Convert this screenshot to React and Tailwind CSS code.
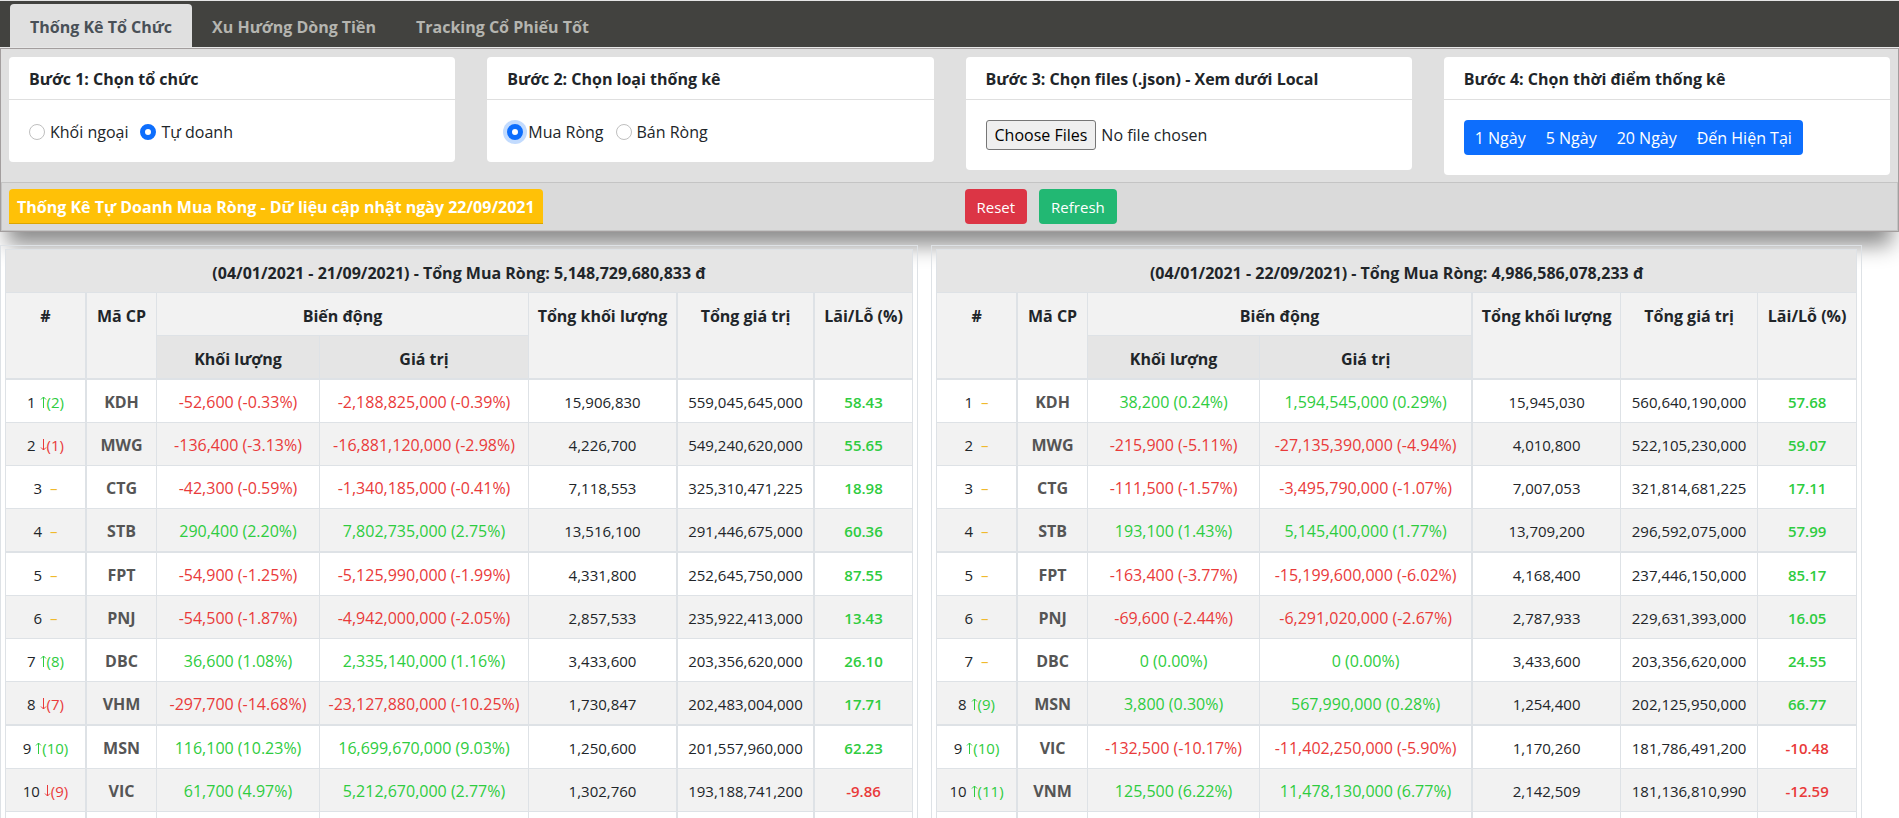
const UP = "up", DOWN = "down", SAME = "same";

const tables = [
  {
    title: "(04/01/2021 - 21/09/2021) - Tổng Mua Ròng: 5,148,729,680,833 đ",
    cols: ["w-[81px]", "w-[70px]", "w-[163px]", "w-[209px]", "w-[149px]", "w-[137px]", "w-[98px]"],
    thick: [true, false, false, false, true, true, false],
    rows: [
      [UP, 2, "KDH", "-52,600 (-0.33%)", "-2,188,825,000 (-0.39%)", "15,906,830", "559,045,645,000", "58.43"],
      [DOWN, 1, "MWG", "-136,400 (-3.13%)", "-16,881,120,000 (-2.98%)", "4,226,700", "549,240,620,000", "55.65"],
      [SAME, 0, "CTG", "-42,300 (-0.59%)", "-1,340,185,000 (-0.41%)", "7,118,553", "325,310,471,225", "18.98"],
      [SAME, 0, "STB", "290,400 (2.20%)", "7,802,735,000 (2.75%)", "13,516,100", "291,446,675,000", "60.36"],
      [SAME, 0, "FPT", "-54,900 (-1.25%)", "-5,125,990,000 (-1.99%)", "4,331,800", "252,645,750,000", "87.55"],
      [SAME, 0, "PNJ", "-54,500 (-1.87%)", "-4,942,000,000 (-2.05%)", "2,857,533", "235,922,413,000", "13.43"],
      [UP, 8, "DBC", "36,600 (1.08%)", "2,335,140,000 (1.16%)", "3,433,600", "203,356,620,000", "26.10"],
      [DOWN, 7, "VHM", "-297,700 (-14.68%)", "-23,127,880,000 (-10.25%)", "1,730,847", "202,483,004,000", "17.71"],
      [UP, 10, "MSN", "116,100 (10.23%)", "16,699,670,000 (9.03%)", "1,250,600", "201,557,960,000", "62.23"],
      [DOWN, 9, "VIC", "61,700 (4.97%)", "5,212,670,000 (2.77%)", "1,302,760", "193,188,741,200", "-9.86"],
    ],
  },
  {
    title: "(04/01/2021 - 22/09/2021) - Tổng Mua Ròng: 4,986,586,078,233 đ",
    cols: ["w-[81px]", "w-[70px]", "w-[172px]", "w-[213px]", "w-[148px]", "w-[137px]", "w-[99px]"],
    thick: [true, false, false, true, false, false, false],
    rows: [
      [SAME, 0, "KDH", "38,200 (0.24%)", "1,594,545,000 (0.29%)", "15,945,030", "560,640,190,000", "57.68"],
      [SAME, 0, "MWG", "-215,900 (-5.11%)", "-27,135,390,000 (-4.94%)", "4,010,800", "522,105,230,000", "59.07"],
      [SAME, 0, "CTG", "-111,500 (-1.57%)", "-3,495,790,000 (-1.07%)", "7,007,053", "321,814,681,225", "17.11"],
      [SAME, 0, "STB", "193,100 (1.43%)", "5,145,400,000 (1.77%)", "13,709,200", "296,592,075,000", "57.99"],
      [SAME, 0, "FPT", "-163,400 (-3.77%)", "-15,199,600,000 (-6.02%)", "4,168,400", "237,446,150,000", "85.17"],
      [SAME, 0, "PNJ", "-69,600 (-2.44%)", "-6,291,020,000 (-2.67%)", "2,787,933", "229,631,393,000", "16.05"],
      [SAME, 0, "DBC", "0 (0.00%)", "0 (0.00%)", "3,433,600", "203,356,620,000", "24.55"],
      [UP, 9, "MSN", "3,800 (0.30%)", "567,990,000 (0.28%)", "1,254,400", "202,125,950,000", "66.77"],
      [UP, 10, "VIC", "-132,500 (-10.17%)", "-11,402,250,000 (-5.90%)", "1,170,260", "181,786,491,200", "-10.48"],
      [UP, 11, "VNM", "125,500 (6.22%)", "11,478,130,000 (6.77%)", "2,142,509", "181,136,810,990", "-12.59"],
    ],
  },
];

const tone = (v) => (v.startsWith("-") ? "text-[#e93a3a]" : "text-[#2ecc40]");

function Trend({ dir, from }) {
  if (dir === SAME) return <span className="pl-1 text-[#f0b92d]">–</span>;
  const up = dir === UP;
  return (
    <span className={"font-medium " + (up ? "text-[#2ecc40]" : "text-[#e93a3a]")}>
      <svg viewBox="0 0 7 12" className="inline h-3 w-[7px] align-baseline" fill="none" stroke="currentColor" aria-hidden="true">
        <path d={up ? "M3.5 12V1M1 3.5L3.5 1L6 3.5" : "M3.5 0V11M1 8.5L3.5 11L6 8.5"} />
      </svg>
      ({from})
    </span>
  );
}

function StatTable({ data }) {
  const edge = (i) => (data.thick[i] ? "border-r-2" : "border-r");
  const th = "border-[#dee2e6] text-base font-bold align-top pt-[11px] ";
  return (
    <div className="border border-[#dee2e6] px-1 pt-[3px]">
      <table className="w-full table-fixed border-separate border-spacing-0 border-l border-t border-[#dee2e6] text-center whitespace-nowrap">
        <colgroup>
          {data.cols.map((c, i) => <col key={i} className={c} />)}
        </colgroup>
        <thead>
          <tr className="h-[43px] bg-[#e5e5e5]">
            <th colSpan={7} className={th + "border-b border-r"}>{data.title}</th>
          </tr>
          <tr className="h-[43px] bg-[#f2f2f2]">
            <th rowSpan={2} className={th + "border-b-2 " + edge(0)}>#</th>
            <th rowSpan={2} className={th + "border-b-2 " + edge(1)}>Mã CP</th>
            <th colSpan={2} className={th + "border-b " + edge(3)}>Biến động</th>
            <th rowSpan={2} className={th + "border-b-2 " + edge(4)}>Tổng khối lượng</th>
            <th rowSpan={2} className={th + "border-b-2 " + edge(5)}>Tổng giá trị</th>
            <th rowSpan={2} className={th + "border-b-2 " + edge(6)}>Lãi/Lỗ (%)</th>
          </tr>
          <tr className="h-11 bg-[#e5e5e5]">
            <th className={th + "border-b-2 " + edge(2)}>Khối lượng</th>
            <th className={th + "border-b-2 " + edge(3)}>Giá trị</th>
          </tr>
        </thead>
        <tbody>
          {data.rows.map((r, n) => {
            const td = "border-[#dee2e6] pt-[2px] " + (n % 4 === 3 ? "border-b-2 " : "border-b ");
            return (
              <tr key={n} className={(n % 4 === 3 ? "h-11" : "h-[43px]") + (n % 2 ? " bg-[#f2f2f2]" : " bg-white")}>
                <td className={td + edge(0)}>{n + 1} <Trend dir={r[0]} from={r[1]} /></td>
                <td className={td + edge(1) + " text-base font-bold text-[#555]"}>{r[2]}</td>
                <td className={td + edge(2) + " text-base font-medium " + tone(r[3])}>{r[3]}</td>
                <td className={td + edge(3) + " text-base font-medium " + tone(r[4])}>{r[4]}</td>
                <td className={td + edge(4)}>{r[5]}</td>
                <td className={td + edge(5)}>{r[6]}</td>
                <td className={td + edge(6) + " font-semibold " + tone(r[7])}>{r[7]}</td>
              </tr>
            );
          })}
          <tr className="h-[43px]">
            {data.cols.map((_, i) => <td key={i} className={"border-b border-[#dee2e6] " + edge(i)} />)}
          </tr>
        </tbody>
      </table>
    </div>
  );
}

function Card({ title, children }) {
  return (
    <section className="rounded bg-white">
      <h2 className="border-b border-[#dfdfdf] px-5 pt-[10px] pb-2 font-bold">{title}</h2>
      <div className="p-5">{children}</div>
    </section>
  );
}

function Radio({ name, label, ...rest }) {
  return (
    <label className="flex items-center gap-[5px]">
      <input
        type="radio"
        name={name}
        className="size-4 appearance-none rounded-full border border-[#bfbfbf] bg-white checked:border-[5px] checked:border-[#0d6efd] focus:outline-none focus:ring-4 focus:ring-[#c2dbfe]"
        {...rest}
      />
      {label}
    </label>
  );
}

export default function App() {
  return (
    <div className="flex h-screen flex-col overflow-hidden bg-white font-['Open_Sans','Noto_Sans',sans-serif] text-base text-[#212529]">
      <header className="shrink-0">
        <nav className="flex h-12 items-end border-t border-b border-t-[#e5e5e5] border-b-[#e8e8e8] bg-[#42423f] pl-[10px] font-bold text-[#b5b5b0]">
          <a href="#to-chuc" className="flex h-[43px] items-center rounded-t bg-[#e0e0e0] px-5 pt-[3px] text-[#495057]">Thống Kê Tổ Chức</a>
          <a href="#dong-tien" className="flex h-[43px] items-center px-5 pt-[3px]">Xu Hướng Dòng Tiền</a>
          <a href="#co-phieu" className="flex h-[43px] items-center px-5 pt-[3px]">Tracking Cổ Phiếu Tốt</a>
        </nav>
        <div className="border border-[#a39e9e] bg-[#e0e0e0] shadow-[0_20px_20px_-7px_rgba(0,0,0,0.46)]">
          <div className="grid min-h-[133px] grid-cols-4 items-start gap-8 px-2 pt-2">
            <Card title="Bước 1: Chọn tổ chức">
              <div className="flex h-[22px] items-center gap-3 pt-[2px]">
                <Radio name="org" label="Khối ngoại" />
                <Radio name="org" label="Tự doanh" defaultChecked />
              </div>
            </Card>
            <Card title="Bước 2: Chọn loại thống kê">
              <div className="flex h-[22px] items-center gap-3 pt-[2px]">
                <Radio name="kind" label="Mua Ròng" defaultChecked autoFocus />
                <Radio name="kind" label="Bán Ròng" />
              </div>
            </Card>
            <Card title="Bước 3: Chọn files (.json) - Xem dưới Local">
              <input
                type="file"
                multiple
                aria-label="Chọn files"
                className="block h-[30px] w-full file:mr-[5px] file:h-[30px] file:rounded-[3px] file:border file:border-solid file:border-[#767676] file:bg-[#efefef] file:px-2 file:text-black"
              />
            </Card>
            <Card title="Bước 4: Chọn thời điểm thống kê">
              <div className="flex h-[35px] w-fit overflow-hidden rounded bg-[#0d6efd] px-px pt-px text-white">
                <button className="px-[10px]">1 Ngày</button>
                <button className="px-[10px]">5 Ngày</button>
                <button className="px-[10px]">20 Ngày</button>
                <button className="px-[10px]">Đến Hiện Tại</button>
              </div>
            </Card>
          </div>
          <div className="grid grid-cols-2 items-center border border-[#c4c4c4] bg-[#dadada] px-[7px] py-[6px]">
            <h1 className="flex h-[35px] w-fit items-center rounded-t border-b border-[#dba500] bg-[#ffc107] px-2 pt-[2px] font-bold text-white">
              Thống Kê Tự Doanh Mua Ròng - Dữ liệu cập nhật ngày 22/09/2021
            </h1>
            <div className="flex gap-3 pl-[15px] text-[15px] text-white">
              <button className="h-[35px] rounded bg-[#dc3545] px-3 pt-[2px]">Reset</button>
              <button className="h-[35px] rounded bg-[#22b873] px-3 pt-[2px]">Refresh</button>
            </div>
          </div>
        </div>
      </header>
      <main className="grid min-h-0 grow grid-cols-[918fr_931fr] items-start gap-[13px] pt-[13px] pr-[37px] text-[15px] leading-6">
        {tables.map((t) => <StatTable key={t.title} data={t} />)}
      </main>
    </div>
  );
}
